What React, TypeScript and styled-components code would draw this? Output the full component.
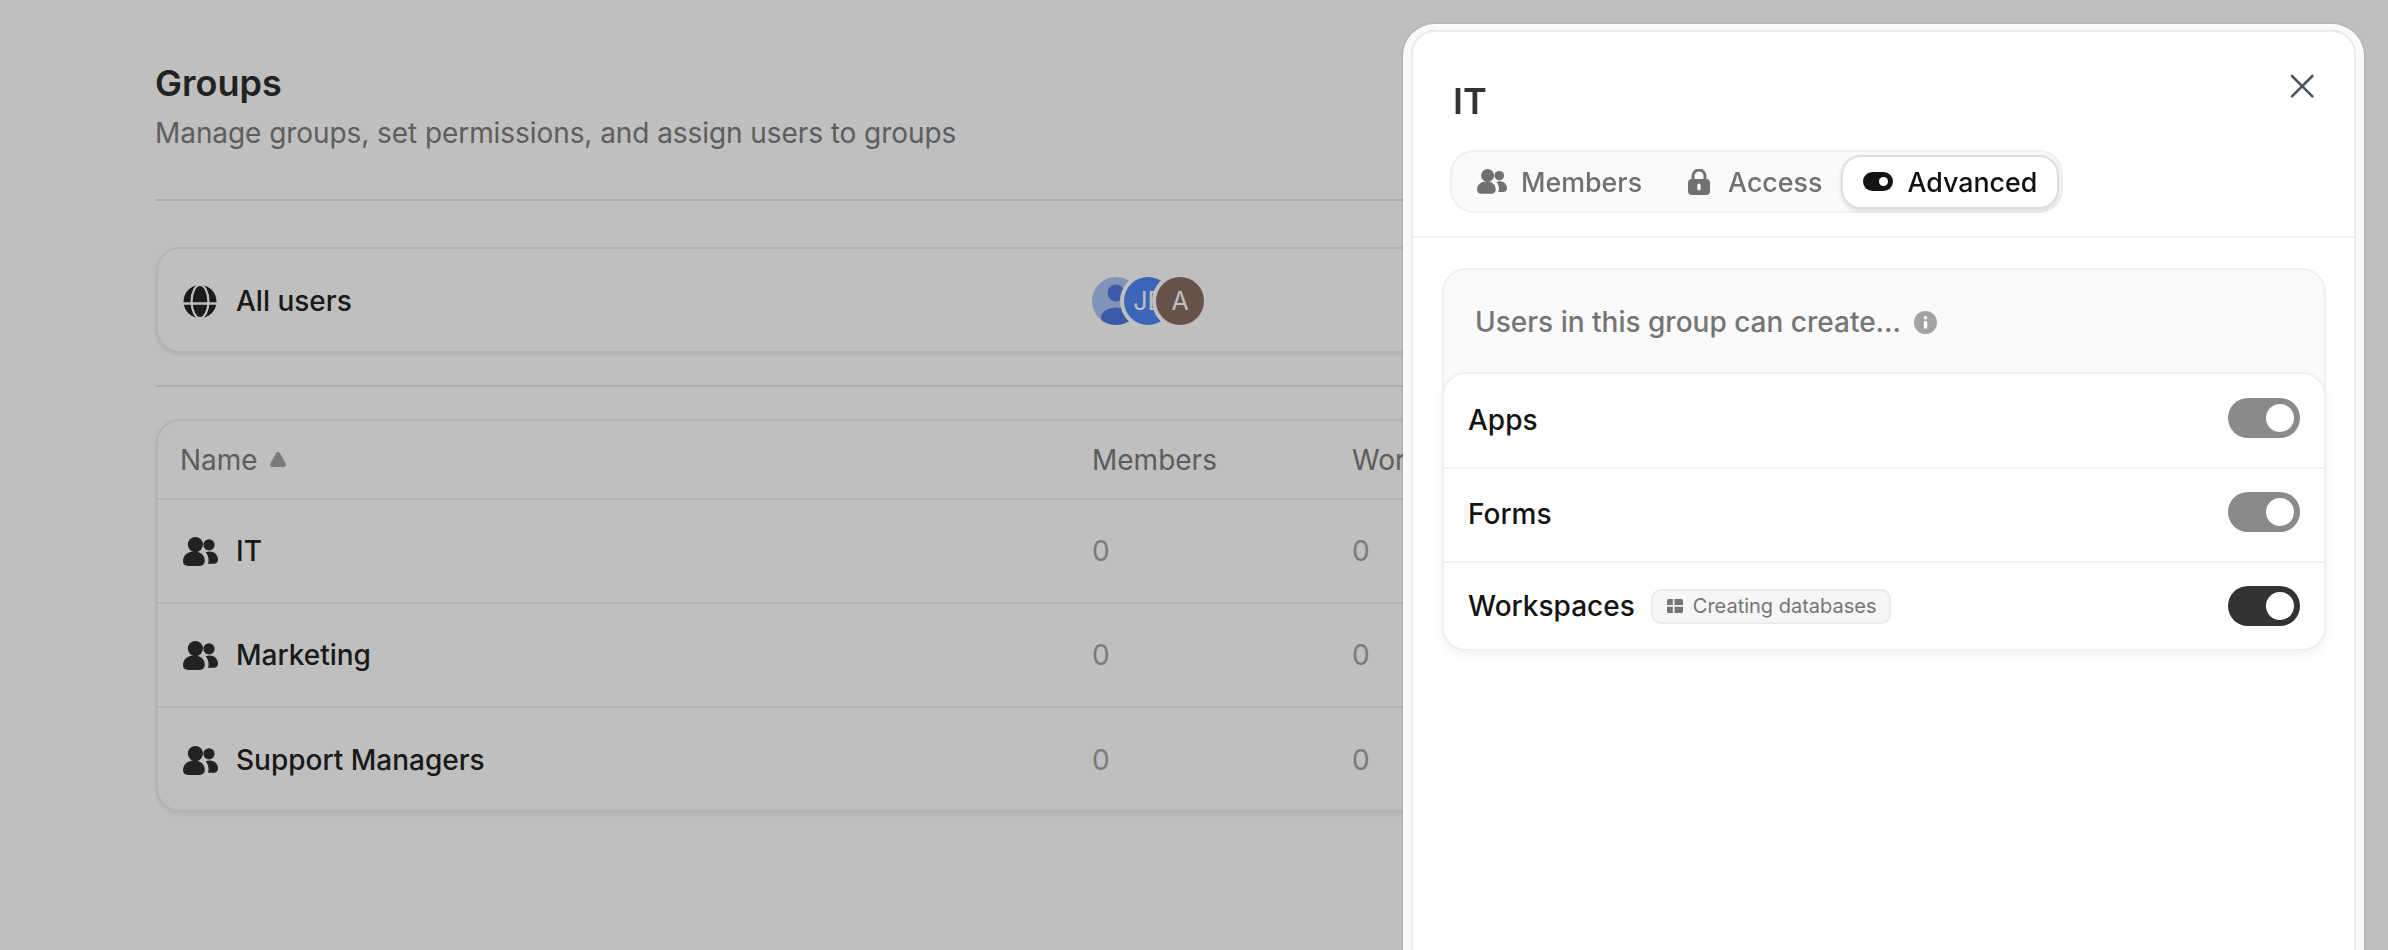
import React from "react";
import styled, { createGlobalStyle } from "styled-components";

const Global = createGlobalStyle`
  html, body { margin: 0; height: 100%; background: #fff; overflow: hidden; }
  body { font-family: Inter, "Noto Sans", sans-serif; -webkit-font-smoothing: antialiased; }
  * { box-sizing: border-box; }
`;

const Page = styled.main`
  width: 2220px;
  padding: 61px 0 0 156px;
`;
const Title = styled.h1`
  margin: 0 0 0 -1px;
  font-size: 36px;
  line-height: 44px;
  font-weight: 600;
  color: #2e2e2e;
`;
const Subtitle = styled.p`
  margin: 6px 0 44px -1px;
  font-size: 28px;
  line-height: 44px;
  letter-spacing: -0.07px;
  color: #7d7d7d;
`;
const Rule = styled.hr<{ $after: number }>`
  margin: 0 0 ${(p) => p.$after}px;
  border: 0;
  height: 2px;
  background: #e4e4e4;
`;
const Card = styled.section`
  border: 2px solid #eeeeee;
  border-radius: 24px;
  background: #fff;
  box-shadow: 0 2px 4px rgba(0, 0, 0, 0.08);
  overflow: hidden;
`;
const AllUsersCard = styled(Card)`
  height: 106px;
  padding-top: 2px;
  margin-bottom: 32px;
`;
const Row = styled.div<{ $height: number; $ruled?: boolean }>`
  display: grid;
  grid-template-columns: 912px 260px 1fr;
  align-items: center;
  height: ${(p) => p.$height}px;
  padding-left: 22px;
  border-top: ${(p) => (p.$ruled ? "2px solid #eeeeee" : "0")};
  &:last-child:not(:first-child) { padding-top: 2px; }
`;
const NameCell = styled.div`
  display: flex;
  align-items: center;
  gap: 18px;
  padding-left: 3px;
  font-size: 28px;
  font-weight: 500;
  color: #232323;
`;
const HeadCell = styled.div`
  display: flex;
  align-items: center;
  gap: 12px;
  font-size: 28px;
  font-weight: 400;
  color: #7d7d7d;
`;
const CountCell = styled.div`
  font-size: 28px;
  color: #a3a3a3;
`;
const Avatars = styled.div`
  display: flex;
`;
const Avatar = styled.div<{ $bg: string }>`
  position: relative;
  width: 48px;
  height: 48px;
  margin-right: -16px;
  border-radius: 50%;
  background: ${(p) => p.$bg};
  box-shadow: 0 0 0 4px #fff;
  display: flex;
  align-items: center;
  justify-content: center;
  overflow: hidden;
  color: #fff;
  font-size: 25px;
  font-weight: 400;
  &:first-child { box-shadow: none; }
`;
const Scrim = styled.div`
  position: fixed;
  inset: 0;
  background: rgba(0, 0, 0, 0.25);
`;
const Modal = styled.aside`
  position: fixed;
  top: 24px;
  left: 1403px;
  width: 961px;
  height: 960px;
  border: solid #fafafa;
  border-width: 6px 8px 0;
  border-radius: 32px 32px 0 0;
  box-shadow: 0 0 3px rgba(0, 0, 0, 0.2);
`;
const Panel = styled.div`
  height: 100%;
  border: 2px solid #ececec;
  border-radius: 24px 24px 0 0;
  background: #fff;
  display: flex;
  flex-direction: column;
`;
const PanelHeader = styled.header`
  position: relative;
  padding: 44px 37px 23px;
  border-bottom: 2px solid #f2f2f2;
`;
const PanelTitle = styled.h2`
  margin: 1px 0 25px 3px;
  font-size: 36px;
  line-height: 48px;
  font-weight: 600;
  color: #333;
`;
const Close = styled.button`
  position: absolute;
  top: 39px;
  right: 37px;
  padding: 0;
  border: 0;
  background: none;
  display: flex;
`;
const Tabs = styled.nav`
  display: inline-flex;
  align-items: center;
  height: 63px;
  padding: 0 2px 0 4px;
  border: 2px solid #f0f0f0;
  border-radius: 24px;
  background: #fafafa;
`;
const Tab = styled.div<{ $active?: boolean }>`
  display: flex;
  align-items: center;
  gap: 14px;
  height: 54px;
  padding: 0 ${(p) => (p.$active ? 20 : 21)}px;
  margin-left: ${(p) => (p.$active ? -2 : 0)}px;
  border-radius: 20px;
  font-size: 26.8px;
  font-weight: 500;
  color: ${(p) => (p.$active ? "#111" : "#717171")};
  background: ${(p) => (p.$active ? "#fff" : "transparent")};
  border: ${(p) => (p.$active ? "2px solid #dedede" : "0")};
  box-shadow: ${(p) => (p.$active ? "0 2px 4px rgba(0,0,0,.12)" : "none")};
`;
const TabIcon = styled.span`
  width: 30px;
  display: flex;
  justify-content: center;
`;
const Body = styled.div`
  padding: 30px 28px 0 29px;
`;
const Settings = styled.section`
  height: 383px;
  border: 2px solid #f0f0f0;
  border-radius: 24px;
  background: #fafafa;
  display: flex;
  flex-direction: column;
`;
const SettingsHead = styled.div`
  height: 102px;
  padding: 2px 0 0 31px;
  display: flex;
  align-items: center;
  gap: 13px;
  font-size: 28px;
  font-weight: 500;
  color: #757575;
`;
const SettingsList = styled.div`
  margin: 0 -2px -2px;
  height: 279px;
  border: 2px solid #f0f0f0;
  border-radius: 24px;
  background: #fff;
  box-shadow: 0 4px 10px rgba(0, 0, 0, 0.06);
  display: flex;
  flex-direction: column;
`;
const SettingRow = styled.div<{ $ruled?: boolean; $height: number; $top?: number; $raised?: boolean }>`
  height: ${(p) => p.$height}px;
  display: flex;
  align-items: center;
  padding: ${(p) => p.$top ?? 0}px 24px ${(p) => (p.$raised ? 2 : 0)}px 24px;
  border-top: ${(p) => (p.$ruled ? "2px solid #f2f2f2" : "0")};
`;
const SettingLabel = styled.span`
  font-size: 28px;
  font-weight: 500;
  color: #141414;
`;
const Badge = styled.span`
  margin-left: 16px;
  height: 35px;
  padding: 0 12px 0 14px;
  display: flex;
  align-items: center;
  gap: 10px;
  border: 2px solid #ebebeb;
  border-radius: 10px;
  background: #f6f6f6;
  font-size: 20px;
  color: #757575;
`;
const Switch = styled.span<{ $on?: boolean; $raised?: boolean }>`
  margin-left: auto;
  margin-bottom: ${(p) => (p.$raised ? 4 : 0)}px;
  width: 72px;
  height: 40px;
  padding: 6px;
  border-radius: 20px;
  background: ${(p) => (p.$on ? "#333" : "#8a8a8a")};
  display: flex;
  justify-content: flex-end;
  &::after {
    content: "";
    width: 28px;
    height: 28px;
    border-radius: 50%;
    background: #fff;
  }
`;
const SortArrow = styled.svg`
  display: block;
`;

const PeopleIcon = ({ w, color }: { w: number; color: string }) => (
  <svg width={w} height={(w * 29) / 35} viewBox="0 0 35 29" fill={color} style={{ flex: "none" }}>
    <circle cx="12.4" cy="7.6" r="7.6" />
    <circle cx="26" cy="7.8" r="5.6" />
    <path d="M11 14.6c6.6 0 10.8 3.700 10.800 9.400 0 3-2 4.900-5 4.900H5.200C2.200 28.900 0 27 0 24.200c0-5.600 4.400-9.600 11-9.600z" />
    <path d="M22.600 15.200c1.300-.5 2.700-.8 4-.8 4.800 0 8.400 3.500 8.400 8.200 0 2.600-1.600 4.200-4 4.200h-6.200c.6-1.200.8-2.200.8-3.400 0-3-1-6-3-8.200z" />
  </svg>
);

const GlobeIcon = () => (
  <svg width="34" height="33" viewBox="0 0 34 33" style={{ flex: "none", marginRight: 1 }}>
    <circle cx="17" cy="16.500" r="16.500" fill="#232323" />
    <ellipse cx="17" cy="16.500" rx="8.400" ry="16.500" fill="none" stroke="#fff" strokeWidth="2.200" />
    <path d="M0 18.500h34" stroke="#fff" strokeWidth="2.400" />
  </svg>
);

const LockIcon = () => (
  <svg width="22" height="26" viewBox="0 0 22 26">
    <path d="M5 11.500V7a6 6 0 0 1 12 0v4.500" fill="none" stroke="#717171" strokeWidth="3" />
    <rect y="10" width="22" height="16" rx="4" fill="#717171" />
    <rect x="9.300" y="14.500" width="3.400" height="7" rx="1.700" fill="#fafafa" />
  </svg>
);

const ToggleIcon = () => (
  <svg width="30" height="19" viewBox="0 0 30 19">
    <rect width="30" height="19" rx="9.500" fill="#141414" />
    <circle cx="20.500" cy="9.500" r="4.500" fill="#fff" />
  </svg>
);

const CloseIcon = () => (
  <svg width="30" height="30" viewBox="0 0 30 30" fill="none" stroke="#4b5563" strokeWidth="2.600" strokeLinecap="round">
    <path d="M5 5l20.400 20.400M25.400 5L5 25.400" />
  </svg>
);

const InfoIcon = () => (
  <svg width="23" height="23" viewBox="0 0 23 23">
    <circle cx="11.500" cy="11.500" r="11.500" fill="#a3a3a3" />
    <circle cx="11.500" cy="6.800" r="1.800" fill="#fff" />
    <rect x="9.800" y="10" width="3.400" height="7.500" rx="1" fill="#fff" />
  </svg>
);

const TableIcon = () => (
  <svg width="16" height="14" viewBox="0 0 16 14" fill="#757575">
    <path d="M1.500 0H5.800v6H0V1.500A1.500 1.500 0 0 1 1.500 0z" />
    <path d="M7.500 0h7A1.500 1.500 0 0 1 16 1.500V6H7.500z" />
    <path d="M0 7.800h5.800V14H1.500A1.500 1.500 0 0 1 0 12.500z" />
    <path d="M7.500 7.800H16v4.700a1.500 1.500 0 0 1-1.500 1.500h-7z" />
  </svg>
);

const PersonGlyph = () => (
  <svg width="48" height="48" viewBox="0 0 48 48" fill="#5178e0">
    <circle cx="24" cy="16" r="8.500" />
    <ellipse cx="24" cy="41" rx="15" ry="10.500" />
  </svg>
);

const groups = ["IT", "Marketing", "Support Managers"];
const toggles = [
  { label: "Apps", height: 93, top: 1, ruled: false },
  { label: "Forms", height: 94, top: 0, ruled: true },
];

export default function App() {
  return (
    <>
      <Global />
      <Page>
        <Title>Groups</Title>
        <Subtitle>Manage groups, set permissions, and assign users to groups</Subtitle>
        <Rule $after={46} />
        <AllUsersCard>
          <Row $height={100}>
            <NameCell>
              <GlobeIcon />
              All users
            </NameCell>
            <Avatars>
              <Avatar $bg="#adc6f5"><PersonGlyph /></Avatar>
              <Avatar $bg="#4f88f5">JE</Avatar>
              <Avatar $bg="#886f63">A</Avatar>
            </Avatars>
          </Row>
        </AllUsersCard>
        <Rule $after={32} />
        <Card>
          <Row $height={77}>
            <HeadCell>
              Name
              <SortArrow width="16" height="15" viewBox="0 0 16 15" fill="#a3a3a3">
                <path d="M6 1.200a2.300 2.300 0 0 1 4 0l5.500 10A2.500 2.500 0 0 1 13.300 15H2.700A2.500 2.500 0 0 1 .5 11.200z" />
              </SortArrow>
            </HeadCell>
            <HeadCell>Members</HeadCell>
            <HeadCell>Workspaces</HeadCell>
          </Row>
          {groups.map((g) => (
            <Row key={g} $height={104} $ruled>
              <NameCell>
                <PeopleIcon w={35} color="#2e2e2e" />
                {g}
              </NameCell>
              <CountCell>0</CountCell>
              <CountCell>0</CountCell>
            </Row>
          ))}
        </Card>
      </Page>
      <Scrim />
      <Modal>
        <Panel>
          <PanelHeader>
            <PanelTitle>IT</PanelTitle>
            <Close aria-label="Close"><CloseIcon /></Close>
            <Tabs>
              <Tab><TabIcon><PeopleIcon w={30} color="#717171" /></TabIcon>Members</Tab>
              <Tab><TabIcon><LockIcon /></TabIcon>Access</Tab>
              <Tab $active><TabIcon><ToggleIcon /></TabIcon>Advanced</Tab>
            </Tabs>
          </PanelHeader>
          <Body>
            <Settings>
              <SettingsHead>
                Users in this group can create...
                <InfoIcon />
              </SettingsHead>
              <SettingsList>
                {toggles.map((t) => (
                  <SettingRow key={t.label} $ruled={t.ruled} $height={t.height} $top={t.top} $raised>
                    <SettingLabel>{t.label}</SettingLabel>
                    <Switch $raised />
                  </SettingRow>
                ))}
                <SettingRow $ruled $height={88}>
                  <SettingLabel>Workspaces</SettingLabel>
                  <Badge><TableIcon />Creating databases</Badge>
                  <Switch $on />
                </SettingRow>
              </SettingsList>
            </Settings>
          </Body>
        </Panel>
      </Modal>
    </>
  );
}
